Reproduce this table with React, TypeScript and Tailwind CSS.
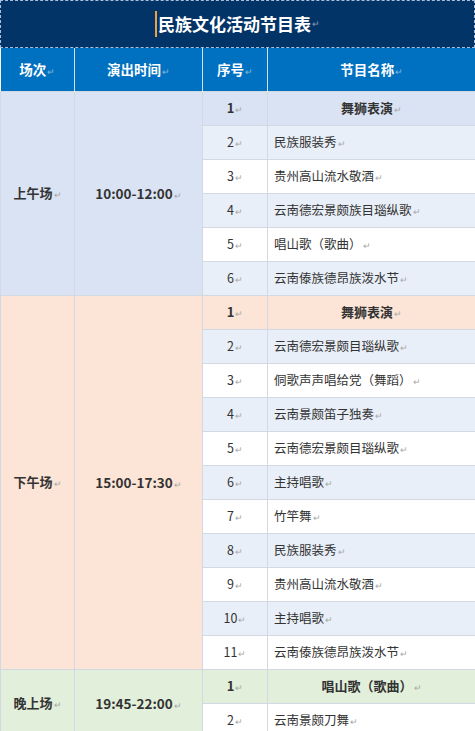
import React from 'react';

type Item = { no: string; name: string; bold?: boolean; plain?: boolean };
type Session = {
    label: string;
    time: string;
    tone: string;
    items: Item[];
};

const sessions: Session[] = [
    {
        label: '上午场',
        time: '10:00-12:00',
        tone: 'bg-[#dae3f3]',
        items: [
            { no: '1', name: '舞狮表演', bold: true },
            { no: '2', name: '民族服装秀' },
            { no: '3', name: '贵州高山流水敬酒' },
            { no: '4', name: '云南德宏景颇族目瑙纵歌' },
            { no: '5', name: '唱山歌（歌曲）' },
            { no: '6', name: '云南傣族德昂族泼水节' },
        ],
    },
    {
        label: '下午场',
        time: '15:00-17:30',
        tone: 'bg-[#fce4d6]',
        items: [
            { no: '1', name: '舞狮表演', bold: true },
            { no: '2', name: '云南德宏景颇目瑙纵歌' },
            { no: '3', name: '侗歌声声唱给党（舞蹈）' },
            { no: '4', name: '云南景颇笛子独奏' },
            { no: '5', name: '云南德宏景颇目瑙纵歌' },
            { no: '6', name: '主持唱歌' },
            { no: '7', name: '竹竿舞' },
            { no: '8', name: '民族服装秀' },
            { no: '9', name: '贵州高山流水敬酒' },
            { no: '10', name: '主持唱歌' },
            { no: '11', name: '云南傣族德昂族泼水节' },
        ],
    },
    {
        label: '晚上场',
        time: '19:45-22:00',
        tone: 'bg-[#e2efda]',
        items: [
            { no: '1', name: '唱山歌（歌曲）', bold: true },
            { no: '2', name: '云南景颇刀舞', plain: true },
        ],
    },
];

function Mark({ light }: { light?: boolean }) {
    return (
        <span className={`ml-[1px] text-[9px] font-normal ${light ? 'text-white/50' : 'text-[#a8a8a8]'}`}>↵</span>
    );
}

export default function App() {
    return (
        <div
            className="w-[475px] h-[731px] overflow-hidden bg-white text-[#333333]"
            style={{ fontFamily: '"Noto Sans CJK SC", "Liberation Sans", sans-serif' }}
        >
            <div className="h-[48px] bg-[#033467] border border-dashed border-[#a9bfdc] flex items-center justify-center">
                <span className="w-[2px] h-[26px] bg-[#f0a040] mr-[1px]" />
                <span className="text-[17px] font-bold text-white">民族文化活动节目表</span>
                <Mark light />
            </div>
            <table className="w-[475px] table-fixed border-collapse text-[12.5px]">
                <colgroup>
                    <col className="w-[74px]" />
                    <col className="w-[128px]" />
                    <col className="w-[65px]" />
                    <col className="w-[208px]" />
                </colgroup>
                <thead>
                    <tr className="h-[43px] bg-[#0070c0] text-white text-[13.5px] font-bold">
                        <th className="border-r border-white/80">场次<Mark light /></th>
                        <th className="border-r border-white/80">演出时间<Mark light /></th>
                        <th className="border-r border-white/80">序号<Mark light /></th>
                        <th>节目名称<Mark light /></th>
                    </tr>
                </thead>
                <tbody>
                    {sessions.map((s) =>
                        s.items.map((item, i) => {
                            const rowTone = item.bold
                                ? s.tone
                                : i % 2 === 1 && !item.plain
                                  ? 'bg-[#e9eff8]'
                                  : 'bg-white';
                            return (
                                <tr key={s.label + item.no} className="h-[34px]">
                                    {i === 0 && (
                                        <>
                                            <td
                                                rowSpan={s.items.length}
                                                className={`${s.tone} border border-[#d3d9e2] text-center font-bold text-[13px]`}
                                            >
                                                {s.label}
                                                <Mark />
                                            </td>
                                            <td
                                                rowSpan={s.items.length}
                                                className={`${s.tone} border border-[#d3d9e2] text-center font-bold text-[13.5px]`}
                                            >
                                                {s.time}
                                                <Mark />
                                            </td>
                                        </>
                                    )}
                                    <td
                                        className={`${rowTone} border border-[#d3d9e2] text-center ${item.bold ? 'font-bold text-[13px]' : ''}`}
                                    >
                                        {item.no}
                                        <Mark />
                                    </td>
                                    <td
                                        className={`${rowTone} border border-[#d3d9e2] ${item.bold ? 'text-center font-bold text-[13px]' : 'pl-[6px]'}`}
                                    >
                                        {item.name}
                                        <Mark />
                                    </td>
                                </tr>
                            );
                        }),
                    )}
                </tbody>
            </table>
        </div>
    );
}
